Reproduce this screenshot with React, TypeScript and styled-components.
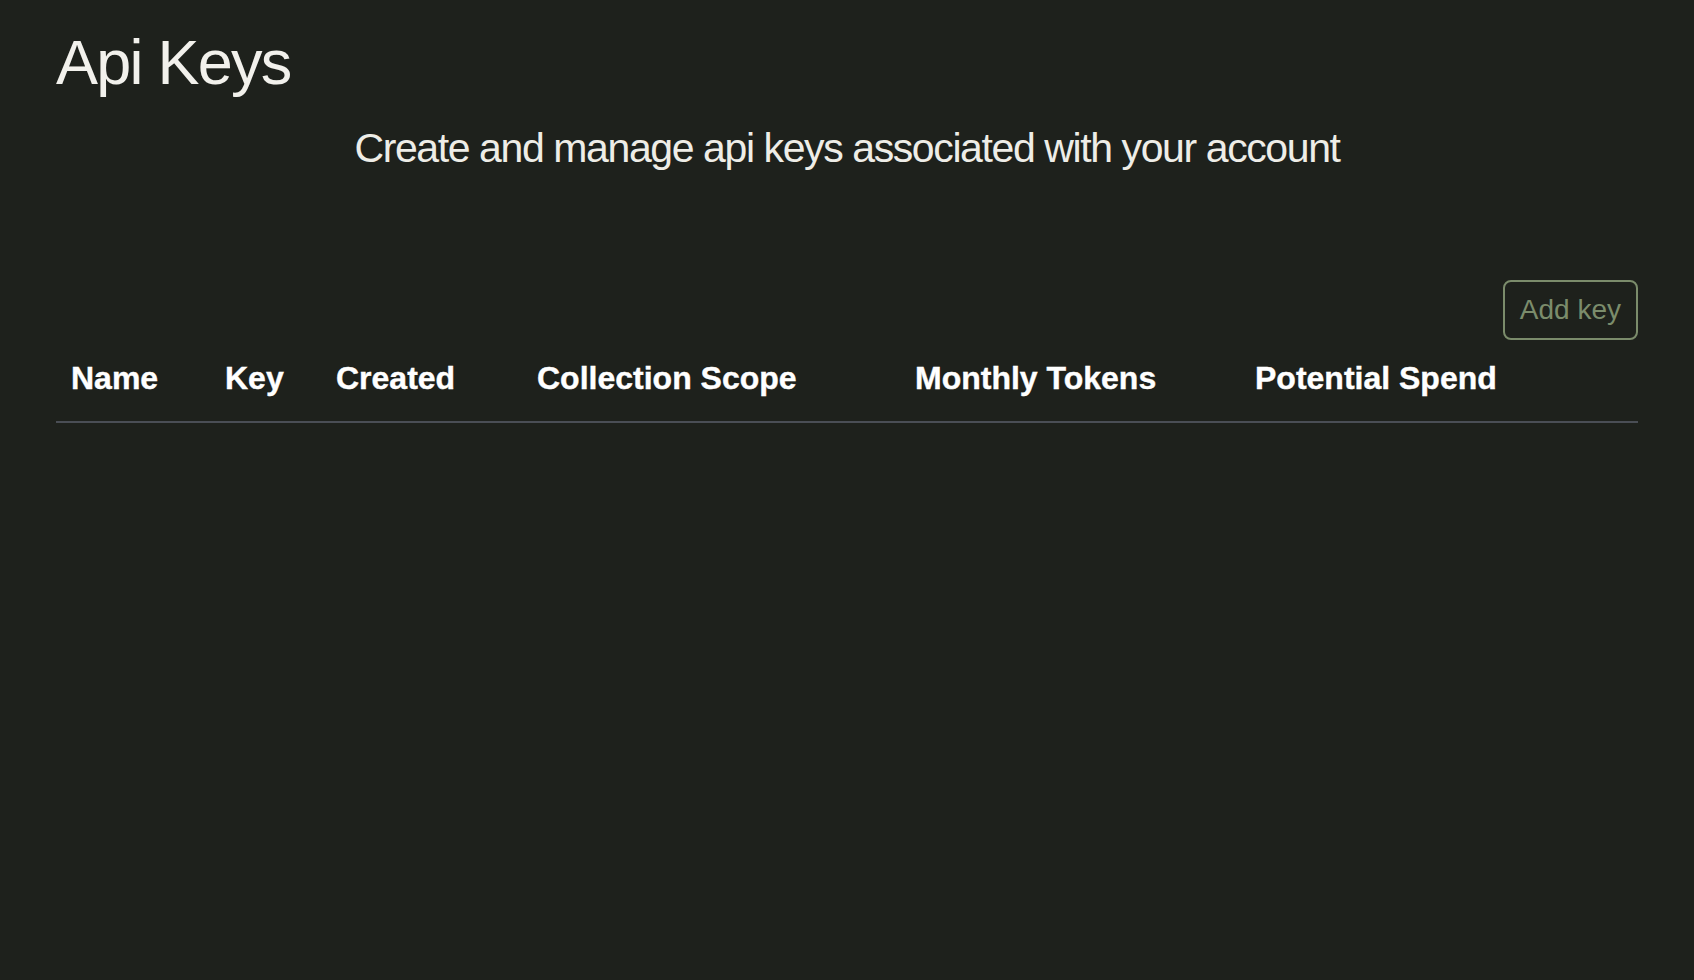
import React from "react";
import styled, { createGlobalStyle } from "styled-components";

const GlobalStyle = createGlobalStyle`
  html, body {
    margin: 0;
    padding: 0;
    background: #1e211c;
  }
  body {
    font-family: "Liberation Sans", Arial, sans-serif;
    min-height: 980px;
  }
`;

const Page = styled.main`
  box-sizing: border-box;
  min-height: 980px;
  padding: 31px 56px 0 56px;
  background: #1e211c;
  display: flex;
  flex-direction: column;
`;

const Title = styled.h1`
  margin: 0;
  font-family: "Liberation Sans", Arial, sans-serif;
  font-size: 63px;
  line-height: 1;
  font-weight: 400;
  letter-spacing: -1.75px;
  color: #f2f1ec;
`;

const Subtitle = styled.p`
  margin: 34px 0 0 0;
  text-align: center;
  font-family: "Liberation Sans", Arial, sans-serif;
  font-size: 41px;
  line-height: 1;
  font-weight: 400;
  letter-spacing: -1.4px;
  color: #eeede7;
`;

const Toolbar = styled.div`
  display: flex;
  justify-content: flex-end;
  margin-top: 111px;
`;

const OutlineButton = styled.button`
  box-sizing: border-box;
  height: 60px;
  padding: 0 15px;
  background: transparent;
  border: 2px solid #7b8c6b;
  border-radius: 8px;
  color: #7b8c6b;
  font-family: "Liberation Sans", Arial, sans-serif;
  font-size: 28px;
  line-height: 1;
  cursor: pointer;
`;

const HeaderRow = styled.div`
  display: grid;
  grid-template-columns: 154px 111px 201px 378px 340px 1fr;
  border-bottom: 2px solid #4a4e55;
`;

const HeaderCell = styled.div`
  padding: 22px 0 27px 15px;
  font-family: "Liberation Sans", Arial, sans-serif;
  font-size: 32px;
  line-height: 1;
  font-weight: 700;
  -webkit-text-stroke: 0.4px #ffffff;
  color: #ffffff;
  white-space: nowrap;
`;

const columns = [
  "Name",
  "Key",
  "Created",
  "Collection Scope",
  "Monthly Tokens",
  "Potential Spend",
];

export default function App() {
  return (
    <>
      <GlobalStyle />
      <Page>
        <Title>Api Keys</Title>
        <Subtitle>Create and manage api keys associated with your account</Subtitle>
        <Toolbar>
          <OutlineButton>Add key</OutlineButton>
        </Toolbar>
        <HeaderRow>
          {columns.map((c) => (
            <HeaderCell key={c}>{c}</HeaderCell>
          ))}
        </HeaderRow>
      </Page>
    </>
  );
}
